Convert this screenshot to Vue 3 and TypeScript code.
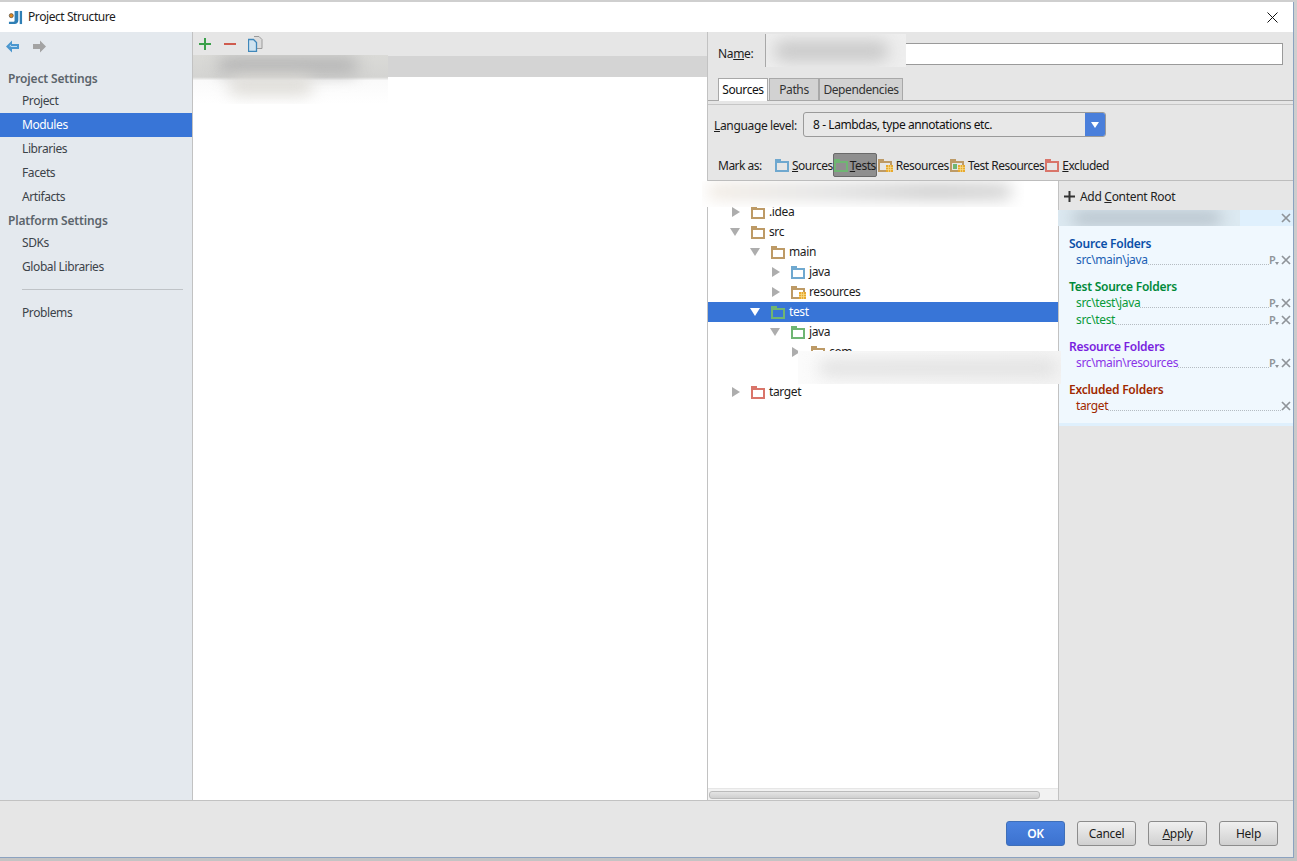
<script setup lang="ts">
interface Nav { label: string; kind: 'head' | 'item' | 'sel' | 'sep' }
const nav: Nav[] = [
  { label: 'Project Settings', kind: 'head' },
  { label: 'Project', kind: 'item' },
  { label: 'Modules', kind: 'sel' },
  { label: 'Libraries', kind: 'item' },
  { label: 'Facets', kind: 'item' },
  { label: 'Artifacts', kind: 'item' },
  { label: 'Platform Settings', kind: 'head' },
  { label: 'SDKs', kind: 'item' },
  { label: 'Global Libraries', kind: 'item' },
  { label: '', kind: 'sep' },
  { label: 'Problems', kind: 'item' },
]
interface Node { label: string; depth: number; open: boolean; color: string; res?: boolean; sel?: boolean }
const tree: (Node | null)[] = [
  { label: '.idea', depth: 0, open: false, color: '#bd9a66' },
  { label: 'src', depth: 0, open: true, color: '#bd9a66' },
  { label: 'main', depth: 1, open: true, color: '#bd9a66' },
  { label: 'java', depth: 2, open: false, color: '#6fa8cf' },
  { label: 'resources', depth: 2, open: false, color: '#bd9a66', res: true },
  { label: 'test', depth: 1, open: true, color: '#6fb573', sel: true },
  { label: 'java', depth: 2, open: true, color: '#6fb573' },
  { label: 'com', depth: 3, open: false, color: '#bd9a66' },
  null,
  { label: 'target', depth: 0, open: false, color: '#d9756a' },
]
interface Group { title: string; cls: string; paths: string[]; pin: boolean }
const groups: Group[] = [
  { title: 'Source Folders', cls: 'blue', paths: ['src\\main\\java'], pin: true },
  { title: 'Test Source Folders', cls: 'green', paths: ['src\\test\\java', 'src\\test'], pin: true },
  { title: 'Resource Folders', cls: 'purple', paths: ['src\\main\\resources'], pin: true },
  { title: 'Excluded Folders', cls: 'brown', paths: ['target'], pin: false },
]
const folder = 'M0 0h6v2h8v11H0zM2 4v7h10V4z'
</script>

<template>
  <div class="screen">
    <div class="window">
      <header class="title">
        <svg class="logo" width="15" height="15" viewBox="0 0 16 16">
          <path d="M7 1h4v10c0 2.500-1.500 4-4 4H1v-2.500h5c1 0 1-.5 1-1.500V4H7z" fill="#2f7fb5" />
          <rect x="12.500" y="1" width="2.500" height="14" fill="#2f7fb5" />
          <circle cx="3.500" cy="6" r="2.200" fill="#e08a1e" stroke="#333" stroke-width=".6" />
        </svg>
        <span class="title-text">Project Structure</span>
        <svg class="close" width="11" height="11" viewBox="0 0 11 11">
          <path d="M.5.5l10 10M10.500.5l-10 10" stroke="#111" fill="none" />
        </svg>
      </header>

      <div class="body">
        <aside class="side">
          <div class="nav-tools">
            <svg width="14" height="13" viewBox="0 0 14 13"><path d="M0 6.500L6 .5v3.500h7v5H6v3.500z" fill="#4b97cf" /><path d="M3 6.500L5 4.500v2.500h6v-1H5" fill="#bcdcf2" /></svg>
            <svg width="14" height="13" viewBox="0 0 14 13"><path d="M14 6.500L8 .5v3.500H1v5h7v3.500z" fill="#a3a3a3" /></svg>
          </div>
          <template v-for="n in nav" :key="n.label + n.kind">
            <div v-if="n.kind === 'head'" class="nav-head">{{ n.label }}</div>
            <div v-else-if="n.kind === 'sep'" class="nav-sep"></div>
            <div v-else class="nav-item" :class="{ selected: n.kind === 'sel' }">{{ n.label }}</div>
          </template>
        </aside>

        <section class="modules">
          <div class="mod-tools">
            <svg width="14" height="14" viewBox="0 0 14 14"><path d="M6 1h2v5h5v2H8v5H6V8H1V6h5z" fill="#3aa04a" /></svg>
            <svg width="14" height="14" viewBox="0 0 14 14"><rect x="1" y="6" width="12" height="2" fill="#cf5b4e" /></svg>
            <svg width="15" height="16" viewBox="0 0 15 16">
              <path d="M6 .5h5l3 3v9H9" fill="#dcdcdc" stroke="#9a9a9a" />
              <path d="M.5 3.500h5l3 3v9h-8z" fill="#cfe3f0" stroke="#3f87ba" stroke-width="1.300" />
            </svg>
          </div>
          <div class="mod-row"></div>
          <div class="smudge mod-smudge"><i></i><i></i></div>
        </section>

        <section class="detail">
          <div class="name-row">
            <label class="name-label">Na<u>m</u>e:</label>
            <div class="name-input"></div>
            <div class="smudge name-smudge"><i></i></div>
          </div>
          <div class="tabs">
            <span class="tab active">Sources</span>
            <span class="tab">Paths</span>
            <span class="tab">Dependencies</span>
          </div>
          <div class="lang-row">
            <span class="lang-label"><u>L</u>anguage level:</span>
            <div class="combo">
              <span class="combo-text">8 - Lambdas, type annotations etc.</span>
              <span class="combo-arrow"><b></b></span>
            </div>
          </div>
          <div class="mark-row">
            <span class="mark-label">Mark as:</span>
            <span class="mark"><svg class="fold" width="14" height="13" viewBox="0 0 14 13"><path :d="folder" fill="#6fa8cf" fill-rule="evenodd" /></svg><span><u>S</u>ources</span></span>
            <span class="mark toggled"><svg class="fold" width="14" height="13" viewBox="0 0 14 13"><path :d="folder" fill="#6fb573" fill-rule="evenodd" /></svg><span><u>T</u>ests</span></span>
            <span class="mark"><svg class="fold" width="15" height="13" viewBox="0 0 15 13"><path :d="folder" fill="#bd9a66" fill-rule="evenodd" /><rect x="8" y="6" width="7" height="7" fill="#e8a92e" /><path d="M8 8.500h7M8 10.500h7M10.500 6v7M12.500 6v7" stroke="#f6dd8e" stroke-width=".7" /></svg><span>Resources</span></span>
            <span class="mark"><svg class="fold" width="15" height="13" viewBox="0 0 15 13"><path :d="folder" fill="#bd9a66" fill-rule="evenodd" /><rect x="3" y="5" width="4" height="5" fill="#6fb573" /><rect x="8" y="6" width="7" height="7" fill="#e8a92e" /><path d="M8 8.500h7M8 10.500h7M10.500 6v7M12.500 6v7" stroke="#f6dd8e" stroke-width=".7" /></svg><span>Test Resources</span></span>
            <span class="mark"><svg class="fold" width="14" height="13" viewBox="0 0 14 13"><path :d="folder" fill="#d9756a" fill-rule="evenodd" /></svg><span><u>E</u>xcluded</span></span>
          </div>

          <div class="split">
            <div class="tree">
              <div class="tree-root"></div>
              <template v-for="(t, i) in tree" :key="i">
                <div v-if="t" class="tree-row" :class="{ selected: t.sel }" :style="{ paddingLeft: 24 + t.depth * 20 + 'px' }">
                  <span class="twist" :class="t.open ? 'down' : 'right'"></span>
                  <svg class="tree-fold" width="15" height="13" viewBox="0 0 15 13">
                    <path :d="folder" :fill="t.color" fill-rule="evenodd" />
                    <template v-if="t.res">
                      <rect x="8" y="6" width="7" height="7" fill="#e8a92e" />
                      <path d="M8 8.500h7M8 10.500h7M10.500 6v7M12.500 6v7" stroke="#f6dd8e" stroke-width=".7" />
                    </template>
                  </svg>
                  <span>{{ t.label }}</span>
                </div>
                <div v-else class="tree-row"></div>
              </template>
              <div class="tree-fill"></div>
              <div class="hscroll"><div class="thumb"></div></div>
              <div class="smudge root-smudge"><i></i></div>
              <div class="smudge com-smudge"><i></i></div>
            </div>

            <div class="roots">
              <div class="add-root">
                <svg width="11" height="11" viewBox="0 0 11 11"><path d="M4.500 0h2v4.500H11v2H6.500V11h-2V6.500H0v-2h4.500z" fill="#333" /></svg>
                <span>Add <u>C</u>ontent Root</span>
              </div>
              <div class="root-card">
                <div class="root-head">
                  <div class="smudge head-smudge"><i></i></div>
                  <svg class="x" width="10" height="10" viewBox="0 0 10 10"><path d="M1 1l8 8M9 1l-8 8" stroke="#8f9499" stroke-width="1.700" /></svg>
                </div>
                <div class="root-body">
                  <div v-for="g in groups" :key="g.title" class="group" :class="g.cls">
                    <div class="group-title">{{ g.title }}</div>
                    <div v-for="p in g.paths" :key="p" class="path-row">
                      <span class="path">{{ p }}</span>
                      <span class="leader"></span>
                      <span v-if="g.pin" class="pin">P<b></b></span>
                      <svg class="x" width="10" height="10" viewBox="0 0 10 10"><path d="M1 1l8 8M9 1l-8 8" stroke="#8f9499" stroke-width="1.700" /></svg>
                    </div>
                  </div>
                </div>
              </div>
            </div>
          </div>
        </section>
      </div>

      <footer class="foot">
        <button class="btn ok">OK</button>
        <button class="btn">Cancel</button>
        <button class="btn"><u>A</u>pply</button>
        <button class="btn">Help</button>
      </footer>
    </div>
  </div>
</template>

<style>
html, body { margin: 0; background: #cfcfcf; overflow: hidden; }
</style>

<style scoped>
u { text-decoration: underline; text-underline-offset: 1px; }
.screen { width: 1297px; height: 861px; background: linear-gradient(#cfcfcf, #c4c4c4); padding-top: 2px; box-sizing: border-box; overflow: hidden; font: 12px/16px "Noto Sans", "Open Sans", sans-serif; color: #1c1c1c; }
.window { width: 1294px; height: 856px; box-sizing: border-box; border-right: 1px solid #8ba2c0; border-bottom: 1px solid #8ba2c0; background: #e6e6e6; display: flex; flex-direction: column; }
.title { height: 30px; flex: none; background: #fff; display: flex; align-items: center; padding: 0 15px 0 8px; }
.logo { margin-right: 5px; }
.title-text { flex: 1; letter-spacing: -.42px; }
.close { display: block; }
.body { flex: 1; display: flex; min-height: 0; }
.side { width: 193px; flex: none; box-sizing: border-box; background: #e4e9ee; border-right: 1px solid #c2c2c2; }
.nav-tools { height: 26px; display: flex; align-items: center; gap: 12px; padding: 2px 0 0 6px; box-sizing: border-box; margin-bottom: 9px; }
.nav-head { height: 22px; line-height: 24px; padding-left: 8px; font-weight: 600; color: #5b646b; letter-spacing: -.15px; }
.nav-item { height: 24px; line-height: 24px; padding-left: 22px; letter-spacing: -.4px; color: #3c4349; }
.nav-item.selected { background: #3875d7; color: #fff; }
.nav-sep { height: 1px; margin: 10px 9px 11px 22px; background: #bfc3c7; }
.modules { width: 515px; flex: none; box-sizing: border-box; background: #fff; border-right: 1px solid #c2c2c2; position: relative; }
.mod-tools { height: 24px; background: #e6e6e6; display: flex; align-items: center; gap: 11px; padding-left: 5px; }
.mod-row { height: 21px; background: #d4d4d4; }
.smudge { position: absolute; overflow: hidden; }
.smudge i { position: absolute; display: block; filter: blur(8px); border-radius: 10px; }
.mod-smudge { left: 0; top: 23px; width: 195px; height: 49px; background: linear-gradient(#dadad7 0, #d4d4d2 45%, #fafafa 52%, #fff 100%); }
.mod-smudge i:first-child { left: 25px; top: 2px; width: 140px; height: 17px; background: #b4b4b4; }
.mod-smudge i:last-child { left: 35px; top: 22px; width: 85px; height: 18px; background: #dddbd6; }
.detail { flex: 1; min-width: 0; display: flex; flex-direction: column; }
.name-row { height: 46px; flex: none; display: flex; align-items: flex-start; padding: 11px 10px 0 10px; box-sizing: border-box; position: relative; }
.name-label { width: 47px; line-height: 22px; letter-spacing: -.35px; }
.name-input { flex: 1; height: 22px; box-sizing: border-box; border: 1px solid #9a9a9a; background: #fff; }
.name-smudge { left: 57px; top: 2px; width: 140px; height: 33px; background: #eeeeee; border-left: 1px solid #a8a8a8; }
.name-smudge i { left: 8px; top: 7px; width: 115px; height: 20px; background: #c8c8c8; }
.tabs { height: 22px; flex: none; display: flex; padding-left: 10px; border-bottom: 1px solid #a8a8a8; }
.tab { box-sizing: border-box; height: 22px; margin-right: 1px; line-height: 22px; text-align: center; background: #d2d2d2; border: 1px solid #a8a8a8; border-bottom: 0; letter-spacing: -.4px; color: #333; width: 50px; }
.tab.active { background: #fff; height: 23px; width: 50px; color: #111; }
.tab:last-child { width: 84px; margin-left: -1px; }
.lang-row { flex: none; margin-top: 3px; padding: 7px 0 0 6px; box-sizing: border-box; border-top: 1px solid #c6c6c6; display: flex; align-items: flex-start; gap: 7px; height: 34px; }
.lang-label { width: 82px; white-space: nowrap; letter-spacing: -.35px; line-height: 28px; }
.combo { width: 303px; height: 25px; box-sizing: border-box; border: 1px solid #9a9a9a; border-radius: 3px; display: flex; background: #e8e8e8; overflow: hidden; }
.combo-text { flex: 1; padding-left: 9px; line-height: 24px; color: #111; letter-spacing: -.42px; }
.combo-arrow { width: 20px; background: #4a7fdb; display: flex; align-items: center; justify-content: center; }
.combo-arrow b { width: 0; height: 0; border: 4.500px solid transparent; border-top: 6px solid #fff; border-bottom: 0; }
.mark-row { flex: none; height: 43px; display: flex; padding: 15px 0 0 10px; box-sizing: border-box; border-bottom: 1px solid #bdbdbd; letter-spacing: -.5px; }
.mark-label { width: 57px; line-height: 26px; }
.mark { display: flex; align-items: center; height: 24px; gap: 3px; box-sizing: border-box; margin-right: 1px; }
.mark > span { padding-top: 2px; }
.mark.toggled { background: #8f8f8f; border: 1px solid #6a6a6a; border-radius: 2px; margin-right: 1px; margin-left: -1px; gap: 2px; }
.fold { flex: none; }
.split { flex: 1; min-height: 0; display: flex; }
.tree { width: 351px; flex: none; box-sizing: border-box; background: #fff; border-right: 1px solid #c2c2c2; display: flex; flex-direction: column; position: relative; }
.tree-root { height: 21px; flex: none; }
.tree-row { height: 20px; flex: none; display: flex; align-items: center; box-sizing: border-box; letter-spacing: -.38px; color: #1c1c1c; }
.tree-row.selected { background: #3875d7; color: #fff; }
.twist { width: 19px; flex: none; display: flex; }
.twist::before { content: ""; width: 0; height: 0; border-style: solid; border-color: transparent; }
.twist.right::before { border-width: 5px 0 5px 8px; border-left-color: #adadad; }
.twist.down::before { border-width: 8px 5px 0 5px; border-top-color: #adadad; margin-left: -2px; }
.tree-row.selected .twist.down::before { border-top-color: #fff; }
.tree-fold { flex: none; margin-right: 3px; }
.tree-fill { flex: 1; }
.hscroll { height: 12px; flex: none; background: #f2f2f2; padding: 2px 0 0 1px; box-sizing: border-box; border-top: 1px solid #e6e6e6; }
.thumb { width: 331px; height: 8px; border-radius: 3px; background: linear-gradient(#e4e4e4, #cfcfcf); border: 1px solid #bbb; box-sizing: border-box; }
.root-smudge { left: -6px; top: 0; width: 322px; height: 26px; background: #fff; }
.root-smudge i { left: 5px; top: 3px; width: 305px; height: 15px; background: linear-gradient(90deg, #f0e9e0, #dcdcdc 40%, #c6c6c6 75%, #cfcfcf); }
.com-smudge { left: 90px; top: 170px; width: 263px; height: 33px; background: linear-gradient(90deg, #fbfbfb, #f4f4f4); }
.com-smudge i { left: 20px; top: 8px; width: 240px; height: 18px; background: #e2e2e2; }
.roots { flex: 1; min-width: 0; }
.add-root { height: 29px; display: flex; align-items: center; gap: 5px; padding: 2px 0 0 5px; box-sizing: border-box; letter-spacing: -.3px; color: #222; }
.root-card { border-bottom: 3px solid #dff0fd; background: #f0f8fe; }
.root-head { height: 16px; background: #dff0fd; position: relative; display: flex; justify-content: flex-end; align-items: center; padding-right: 2px; }
.head-smudge { left: -1px; top: 0; width: 182px; height: 16px; background: #dce9f1; }
.head-smudge i { left: 14px; top: 2px; width: 150px; height: 12px; background: #aeb9c2; }
.root-body { padding: 9px 2px 8px 10px; display: flex; flex-direction: column; gap: 9px; height: 197px; box-sizing: border-box; }
.group-title { height: 17px; line-height: 17px; font-weight: 600; letter-spacing: -.25px; }
.path-row { height: 17px; display: flex; align-items: center; padding: 0 0 2px 7px; box-sizing: border-box; }
.path { letter-spacing: -.36px; }
.leader { flex: 1; align-self: flex-end; margin-bottom: 2px; border-bottom: 1px dotted #b5bcc2; }
.pin { position: relative; width: 10px; margin-right: 2px; font-size: 11px; color: #8f9499; font-weight: 600; line-height: 12px; }
.pin b { position: absolute; right: 0; bottom: 1px; width: 0; height: 0; border: 2px solid transparent; border-top: 3px solid #8f9499; border-bottom: 0; }
.x { flex: none; }
.blue { color: #0a4fa8; } .blue .path { color: #1a5fb4; }
.green { color: #008a3a; } .green .path { color: #089a3a; }
.purple { color: #7a1fe0; } .purple .path { color: #8a35e8; }
.brown { color: #a02800; } .brown .path { color: #a02800; }
.foot { height: 57px; flex: none; box-sizing: border-box; border-top: 1px solid #c2c2c2; display: flex; justify-content: flex-end; gap: 12px; padding: 20px 15px 0 0; }
.btn { width: 59px; height: 25px; padding: 0; border: 1px solid #8c8c8c; border-radius: 3px; background: linear-gradient(#f0f0f0, #d0d0d0); font: inherit; letter-spacing: -.3px; color: #1c1c1c; }
.btn.ok { background: linear-gradient(#4b83e0, #3c72cf); border-color: #3f6fb8; color: #fff; font-weight: 600; }
</style>
